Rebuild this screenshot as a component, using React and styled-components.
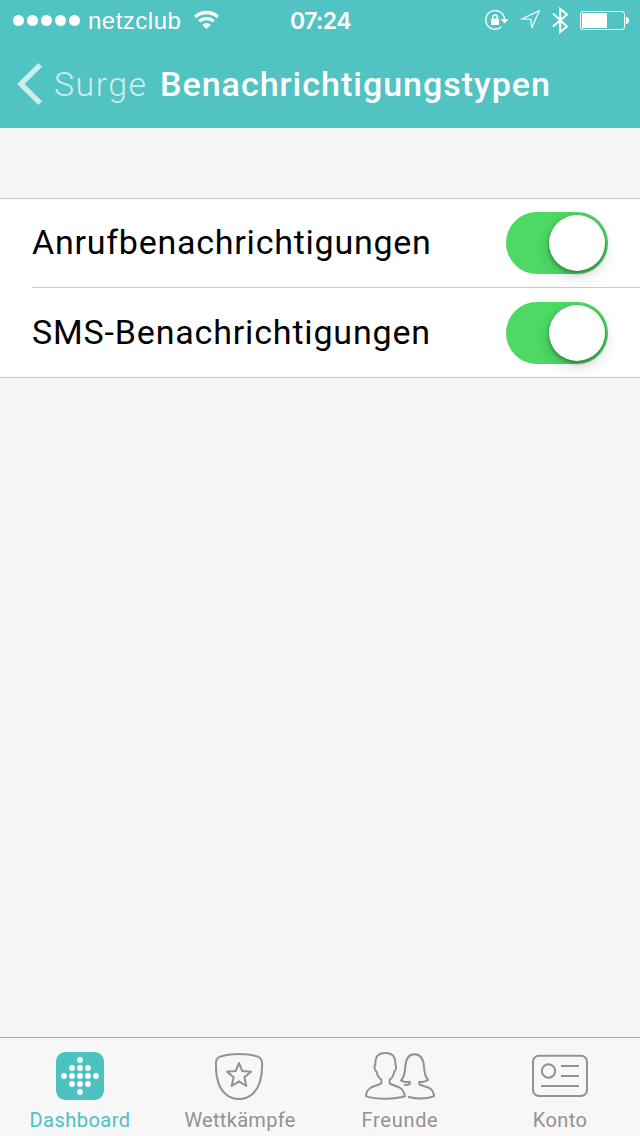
import { useState } from "react";
import styled, { createGlobalStyle } from "styled-components";

const GlobalStyle = createGlobalStyle`
  * {
    box-sizing: border-box;
  }
  body {
    margin: 0;
    background: #f5f5f5;
    font-family: Roboto, "Liberation Sans", sans-serif;
  }
`;

const Screen = styled.div`
  display: flex;
  flex-direction: column;
  width: 640px;
  height: 1136px;
  background: #f5f5f5;
  overflow: hidden;
`;

const Header = styled.header`
  height: 128px;
  background: #52c3c3;
  color: #fff;
`;

const StatusBar = styled.div`
  display: grid;
  grid-template-columns: 1fr auto 1fr;
  align-items: center;
  height: 41px;
  padding: 0 10px 0 13px;
  font-family: "Liberation Sans", sans-serif;
`;

const StatusGroup = styled.div`
  display: flex;
  align-items: center;
  justify-content: ${(props) => (props.$end ? "flex-end" : "flex-start")};
`;

const Signal = styled.div`
  display: flex;
  gap: 3px;
  margin-right: 8px;
`;

const SignalDot = styled.span`
  width: 11px;
  height: 11px;
  border-radius: 50%;
  background: #fff;
`;

const Carrier = styled.span`
  width: 105px;
  font-size: 24px;
  line-height: 41px;
  letter-spacing: 0.5px;
`;

const Clock = styled.span`
  padding: 2px 2px 0 0;
  font-family: Inter, "Liberation Sans", sans-serif;
  font-size: 23px;
  font-weight: 600;
  line-height: 39px;
  letter-spacing: -0.6px;
`;

const NavBar = styled.nav`
  display: flex;
  align-items: center;
  height: 87px;
  padding: 0 0 1px 16px;
`;

const BackButton = styled.button`
  display: flex;
  align-items: center;
  gap: 11px;
  width: 144px;
  padding: 0;
  border: 0;
  background: none;
  color: #fff;
  opacity: 0.7;
  font-family: inherit;
  font-size: 34px;
  font-weight: 300;
  line-height: 40px;
  letter-spacing: 1.4px;
`;

const Title = styled.h1`
  margin: 0;
  font-size: 34px;
  font-weight: 500;
  line-height: 40px;
  letter-spacing: 1px;
  white-space: nowrap;
`;

const Content = styled.main`
  flex: 1;
  padding-top: 70px;
`;

const SettingsList = styled.ul`
  margin: 0;
  padding: 0 0 0 32px;
  list-style: none;
  background: #fff;
  border-top: 1px solid #c8c7cc;
  border-bottom: 1px solid #c8c7cc;
`;

const SettingsRow = styled.li`
  display: flex;
  align-items: center;
  justify-content: space-between;
  height: 88px;
  padding-right: 32px;
  & + & {
    border-top: 1px solid #c8c7cc;
    height: 90px;
  }
`;

const RowLabel = styled.span`
  padding-bottom: 2px;
  font-size: 34px;
  line-height: 40px;
  letter-spacing: ${(props) => props.$spacing};
  color: #000;
`;

const Toggle = styled.button`
  display: flex;
  align-items: center;
  justify-content: ${(props) => (props.$on ? "flex-end" : "flex-start")};
  width: 102px;
  height: 62px;
  padding: 0 3px;
  border: 0;
  border-radius: 31px;
  background: ${(props) => (props.$on ? "#4cd964" : "#e5e5e5")};
`;

const Knob = styled.span`
  width: 56px;
  height: 56px;
  border-radius: 50%;
  background: #fff;
  box-shadow: 0 6px 16px rgba(0, 0, 0, 0.14), 0 2px 4px rgba(0, 0, 0, 0.38);
`;

const TabBar = styled.footer`
  display: grid;
  grid-template-columns: repeat(4, 1fr);
  height: 99px;
  border-top: 1px solid #acacac;
  background: #f7f7f7;
`;

const Tab = styled.a`
  display: flex;
  flex-direction: column;
  align-items: center;
  padding-top: 13px;
  color: ${(props) => (props.$active ? "#4bc1c2" : "#929292")};
`;

const TabIcon = styled.div`
  display: flex;
  align-items: center;
  height: 50px;
`;

const TabLabel = styled.span`
  margin-top: 7px;
  font-size: 20px;
  line-height: 24px;
  letter-spacing: ${(props) => props.$spacing};
`;

const WifiIcon = () => (
  <svg width="27" height="21" viewBox="193 10 27 21" fill="none" stroke="#fff">
    <path d="M195.2 17 A16.5 16.5 0 0 1 217.8 17" strokeWidth="3.3" />
    <path d="M199.3 21.4 A10.6 10.6 0 0 1 213.7 21.4" strokeWidth="3.1" />
    <path d="M202.2 24.7 A6.4 6.4 0 0 1 210.8 24.7 L206.5 29 Z" fill="#fff" stroke="none" />
  </svg>
);

const StatusIcons = () => (
  <svg width="146" height="31" viewBox="484 5 146 31" fill="none" stroke="#fff">
    <path d="M504.6 19.5 A9.4 9.4 0 1 0 501.6 26.8" strokeWidth="1.4" />
    <path d="M500.8 19.2 H508.4 L504.6 23.4 Z" fill="#fff" stroke="none" />
    <rect x="491" y="18.7" width="8" height="6.3" fill="#fff" stroke="none" />
    <path d="M492.7 19 V17.4 A2.3 2.4 0 0 1 497.3 17.4 V19" strokeWidth="1.4" />
    <path d="M539.2 10.7 L522 18.9 L530.9 19.5 L531.7 28 Z" strokeWidth="1.2" />
    <path d="M553 13.6 L567 26.4 L560.2 32 V8.8 L567 14.4 L553 26.6" strokeWidth="2" />
    <rect x="580.5" y="11.5" width="44" height="18" rx="2.5" />
    <rect x="582" y="13" width="25" height="15" rx="0.6" fill="#fff" stroke="none" />
    <path d="M626.2 17.2 A3.4 3.4 0 0 1 626.2 23.8 Z" fill="#fff" />
  </svg>
);

const BackIcon = () => (
  <svg width="27" height="44" viewBox="16 62 27 44" fill="none" stroke="#fff" strokeWidth="5.3">
    <path d="M40.2 64.8 L20.9 84 L40.2 103.2" />
  </svg>
);

const dots = [
  [0, -2],
  [-1, -1], [0, -1], [1, -1],
  [-2, 0], [-1, 0], [0, 0], [1, 0], [2, 0],
  [-1, 1], [0, 1], [1, 1],
  [0, 2],
];

const DashboardIcon = () => (
  <svg width="48" height="48" viewBox="0 0 48 48">
    <rect width="48" height="48" rx="9.5" fill="#4bc1c2" />
    {dots.map(([x, y]) => (
      <circle key={`${x},${y}`} cx={24 + x * 8} cy={24 + y * 8} r="2.9" fill="#fff" />
    ))}
  </svg>
);

const LineIcon = styled.svg`
  fill: none;
  stroke: #929292;
  stroke-width: 6;
  stroke-linejoin: round;
`;

const ChallengesIcon = () => (
  <LineIcon width="50" height="50" viewBox="135 63 150 150">
    <path d="M207 72 C229 72 249 75 263 80 C271 83 275 88 276 97 C277 116 275 139 269 158 C259 189 235 207 207 207 C179 207 155 189 145 158 C139 139 137 116 138 97 C139 88 143 83 151 80 C165 75 185 72 207 72 Z" />
    <path d="M207 99 L217 123 L243 125 L223 142 L229 168 L207 154 L185 168 L191 142 L171 125 L197 123 Z" />
  </LineIcon>
);

const FriendsIcon = () => (
  <LineIcon width="72" height="50" viewBox="72 63 216 150" strokeLinecap="round">
    <path d="M136 69 C114 69 105 81 106 104 C102 107 103 121 109 124 C112 136 116 144 124 149 V160 C116 166 101 167 91 174 C83 180 78 190 78 199 C98 205 119 206 136 206 C158 206 178 204 195 199 C193 188 188 179 181 174 C171 168 157 166 149 160 V149 C157 144 161 136 163 124 C169 121 170 107 166 104 C167 81 158 69 136 69 Z" />
    <path d="M194 165 C201 165 207 164 209 162 V155 C200 157 189 155 183 151 C193 143 195 126 196 110 C198 84 206 73 223 73 C241 73 250 84 252 110 C253 126 255 141 264 150 C257 155 247 157 238 155 V163 C247 168 259 169 268 174 C277 180 282 190 282 199 C260 206 230 207 206 201" />
  </LineIcon>
);

const AccountIcon = () => (
  <LineIcon width="56" height="50" viewBox="66 63 168 150">
    <rect x="69" y="77" width="162" height="121" rx="18" />
    <circle cx="115.5" cy="123" r="20" />
    <path d="M153 108 H207 M153 138 H207 M93 168 H207" />
  </LineIcon>
);

const tabs = [
  { label: "Dashboard", icon: DashboardIcon, spacing: "0.5px", active: true },
  { label: "Wettkämpfe", icon: ChallengesIcon, spacing: "0.3px" },
  { label: "Freunde", icon: FriendsIcon, spacing: "0.7px" },
  { label: "Konto", icon: AccountIcon, spacing: "0.4px" },
];

const Setting = ({ label, spacing }) => {
  const [on, setOn] = useState(true);
  return (
    <SettingsRow>
      <RowLabel $spacing={spacing}>{label}</RowLabel>
      <Toggle $on={on} role="switch" aria-checked={on} aria-label={label} onClick={() => setOn(!on)}>
        <Knob />
      </Toggle>
    </SettingsRow>
  );
};

const App = () => {
  return (
    <>
      <GlobalStyle />
      <Screen>
        <Header>
          <StatusBar>
            <StatusGroup>
              <Signal>
                {[1, 2, 3, 4, 5].map((dot) => (
                  <SignalDot key={dot} />
                ))}
              </Signal>
              <Carrier>netzclub</Carrier>
              <WifiIcon />
            </StatusGroup>
            <Clock>07:24</Clock>
            <StatusGroup $end>
              <StatusIcons />
            </StatusGroup>
          </StatusBar>
          <NavBar>
            <BackButton>
              <BackIcon />
              Surge
            </BackButton>
            <Title>Benachrichtigungstypen</Title>
          </NavBar>
        </Header>
        <Content>
          <SettingsList>
            <Setting label="Anrufbenachrichtigungen" spacing="0.76px" />
            <Setting label="SMS-Benachrichtigungen" spacing="0.83px" />
          </SettingsList>
        </Content>
        <TabBar>
          {tabs.map(({ label, icon: Icon, spacing, active }) => (
            <Tab key={label} $active={active}>
              <TabIcon>
                <Icon />
              </TabIcon>
              <TabLabel $spacing={spacing}>{label}</TabLabel>
            </Tab>
          ))}
        </TabBar>
      </Screen>
    </>
  );
};

export default App;
